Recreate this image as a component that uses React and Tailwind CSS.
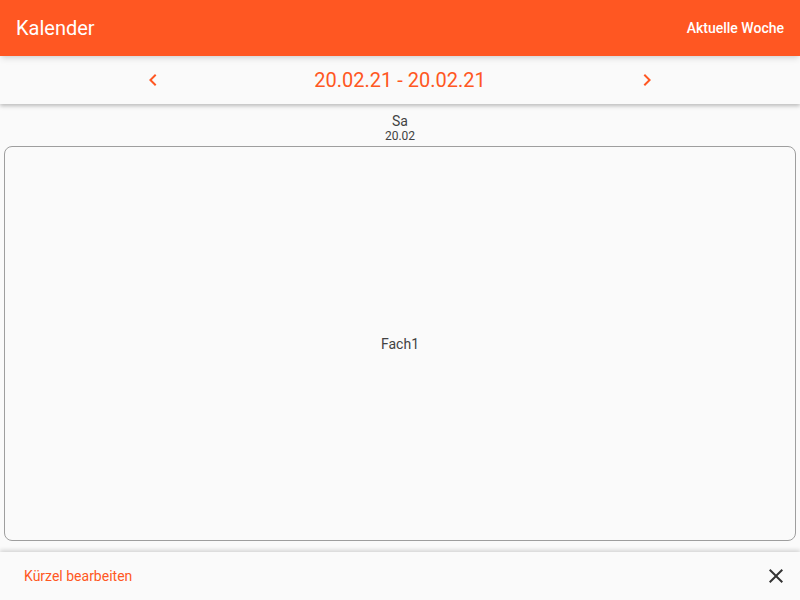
import React from 'react';

const Chevron = ({ dir }) => (
  <svg width="24" height="24" viewBox="0 0 24 24" fill="currentColor">
    {dir === 'left' ? (
      <path d="M15.41 7.41 14 6l-6 6 6 6 1.41-1.41L10.83 12z" />
    ) : (
      <path d="M10 6 8.59 7.41 13.17 12l-4.58 4.59L10 18l6-6z" />
    )}
  </svg>
);

const App = () => {
  return (
    <div className="h-[600px] w-[800px] flex flex-col bg-[#fafafa] overflow-hidden" style={{ fontFamily: 'Roboto, sans-serif' }}>
      <header className="h-14 bg-[#ff5722] flex items-center justify-between px-4 text-white shadow-md z-20">
        <h1 className="text-xl">Kalender</h1>
        <button className="text-sm font-medium">Aktuelle Woche</button>
      </header>

      <div className="h-12 flex items-center justify-center gap-[135px] bg-[#fafafa] shadow-[0_2px_4px_rgba(0,0,0,0.25)] z-10 text-[#ff5722]">
        <Chevron dir="left" />
        <span className="text-xl w-[200px] text-center">20.02.21 - 20.02.21</span>
        <Chevron dir="right" />
      </div>

      <div className="flex-1 flex flex-col px-1 pt-[9px] pb-[11px]">
        <div className="flex flex-col items-center text-[#424242] leading-none">
          <span className="text-sm leading-4">Sa</span>
          <span className="text-xs leading-[14px]">20.02</span>
        </div>
        <div className="mt-[3px] flex-1 border border-[#9e9e9e] rounded-lg flex items-center justify-center text-sm text-[#424242]">
          Fach1
        </div>
      </div>

      <footer className="h-12 flex items-center justify-between pl-6 pr-3 bg-[#fafafa] shadow-[0_-2px_4px_rgba(0,0,0,0.15)] z-10">
        <span className="text-sm text-[#ff5722]">Kürzel bearbeiten</span>
        <svg width="24" height="24" viewBox="0 0 24 24" fill="#333">
          <path d="M19 6.41 17.59 5 12 10.59 6.41 5 5 6.41 10.59 12 5 17.59 6.41 19 12 13.41 17.59 19 19 17.59 13.41 12z" />
        </svg>
      </footer>
    </div>
  );
};

export default App;
